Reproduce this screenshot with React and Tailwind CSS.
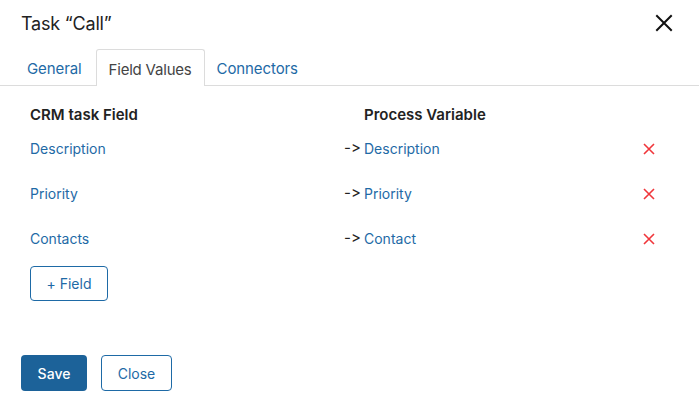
import React from 'react';

const rows = [
  { field: 'Description', variable: 'Description' },
  { field: 'Priority', variable: 'Priority' },
  { field: 'Contacts', variable: 'Contact' },
];

const App = () => {
  return (
    <div className="w-[699px] h-[404px] bg-white text-[#333] font-['Inter',sans-serif] [font-feature-settings:'calt'_0] flex flex-col">
      {/* Header */}
      <div className="flex items-center justify-between pl-[21px] pr-[26px] h-[45px] pt-[1px]">
        <h1 className="text-[18px] tracking-[-0.2px] text-[#222]">Task “Call”</h1>
        <button type="button" className="w-[18px] h-[18px] flex items-center justify-center">
          <svg viewBox="0 0 18 18" className="w-[18px] h-[18px]" stroke="#111" strokeWidth="2" strokeLinecap="square">
            <path d="M2 2 L16 16 M16 2 L2 16" />
          </svg>
        </button>
      </div>

      {/* Tabs */}
      <div className="flex items-end pl-[12px] border-b border-[#dcdcdc] h-[41px]">
        <div className="pl-[15px] pr-[14px] h-[36px] pt-[4px] flex items-center text-[15px] tracking-[-0.1px] text-[#1e6aa6]">General</div>
        <div className="px-[12px] h-[37px] pt-[4px] flex items-center text-[15px] tracking-[-0.2px] text-[#444] border border-b-0 border-[#dcdcdc] rounded-t-[3px] bg-white -mb-[1px]">Field Values</div>
        <div className="px-[12px] h-[36px] pt-[4px] flex items-center text-[15px] tracking-[-0.1px] text-[#1e6aa6]">Connectors</div>
      </div>

      {/* Mapping table */}
      <div className="pl-[30px] pr-[44px] pt-[18px]">
        <div className="flex items-center h-[22px] text-[15px] font-semibold text-[#222]">
          <div className="w-[334px]">CRM task Field</div>
          <div>Process Variable</div>
        </div>
        {rows.map((row) => (
          <div key={row.field} className="flex items-center h-[45px] text-[14px]">
            <div className="w-[314px] text-[#1e6aa6]">{row.field}</div>
            <div className="w-[20px] text-[#222] text-[15px]">-&gt;</div>
            <div className="flex-1 text-[#1e6aa6]">{row.variable}</div>
            <svg viewBox="0 0 12 12" className="w-[12px] h-[12px]" stroke="#f0363b" strokeWidth="1.6">
              <path d="M1 1 L11 11 M11 1 L1 11" />
            </svg>
          </div>
        ))}
        <button
          type="button"
          className="mt-[5px] w-[78px] h-[35px] border border-[#1e6aa6] rounded-[4px] text-[14px] text-[#1e6aa6]"
        >
          + Field
        </button>
      </div>

      {/* Footer */}
      <div className="flex gap-[14px] pl-[21px] mt-[54px]">
        <button type="button" className="w-[66px] h-[36px] bg-[#1c6299] rounded-[4px] text-white text-[14px] font-medium">
          Save
        </button>
        <button type="button" className="w-[71px] h-[36px] border border-[#1e6aa6] rounded-[4px] text-[#1e6aa6] text-[14px]">
          Close
        </button>
      </div>
    </div>
  );
};

export default App;
